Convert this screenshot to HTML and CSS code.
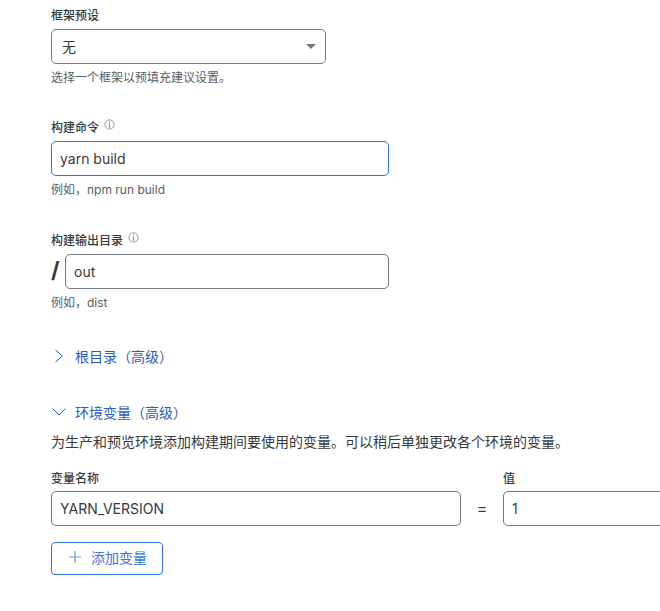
FILE: index.html
```html
<!DOCTYPE html>
<html lang="zh">
<head>
<meta charset="utf-8">
<title>构建设置</title>
<link rel="stylesheet" href="styles.css">
</head>
<body>
<main class="form">
  <section class="field field-preset">
    <div class="label">框架预设</div>
    <div class="box box-select"><span>无</span><span class="caret"></span></div>
    <div class="hint">选择一个框架以预填充建议设置。</div>
  </section>
  <section class="field field-command">
    <div class="label label-tip">构建命令 <svg class="info" viewBox="0 0 10 10"><circle cx="5" cy="5" r="4.2"/><path d="M5 4.4V7.4M4.2 7.4H5.8M4.4 4.4H5"/><circle class="dot" cx="5" cy="2.8" r=".5"/></svg></div>
    <div class="box box-wide box-focus">yarn build</div>
    <div class="hint">例如，npm run build</div>
  </section>
  <section class="field field-output">
    <div class="label label-tip">构建输出目录 <svg class="info" viewBox="0 0 10 10"><circle cx="5" cy="5" r="4.2"/><path d="M5 4.4V7.4M4.2 7.4H5.8M4.4 4.4H5"/><circle class="dot" cx="5" cy="2.8" r=".5"/></svg></div>
    <div class="path-row"><span class="slash">/</span><div class="box box-grow">out</div></div>
    <div class="hint">例如，dist</div>
  </section>
  <div class="toggle toggle-root">
    <svg class="chev" viewBox="0 0 14 14"><path d="M3.5 1L10.5 7L3.5 13"/></svg>
    <span>根目录（高级）</span>
  </div>
  <div class="toggle toggle-env">
    <svg class="chev" viewBox="0 0 14 14"><path d="M.5 3.5L7 10L13.5 3.5"/></svg>
    <span>环境变量（高级）</span>
  </div>
  <p class="desc">为生产和预览环境添加构建期间要使用的变量。可以稍后单独更改各个环境的变量。</p>
  <div class="vars">
    <div class="var-col var-name">
      <div class="label">变量名称</div>
      <div class="box">YARN_VERSION</div>
    </div>
    <div class="equals">=</div>
    <div class="var-col var-value">
      <div class="label">值</div>
      <div class="box">1</div>
    </div>
  </div>
  <button class="add" type="button">
    <svg class="plus" viewBox="0 0 12 12"><path d="M6 0V12M0 6H12"/></svg>
    <span>添加变量</span>
  </button>
</main>
</body>
</html>
```
FILE: styles.css
```css
html, body {
  margin: 0;
  height: 611px;
  overflow: hidden;
  background: #fff;
}
body {
  font-family: Inter, "Noto Sans CJK SC", sans-serif;
  color: #36393a;
}
.form {
  padding: 7px 0 0 51px;
  width: 660px;
  height: 611px;
  overflow: hidden;
  box-sizing: border-box;
}
.label {
  font-size: 12px;
  font-weight: 500;
  line-height: 18px;
  height: 18px;
  margin-bottom: 4px;
  color: #36393a;
  white-space: nowrap;
}
.label-tip {
  line-height: 16px;
}
.box {
  box-sizing: border-box;
  height: 35px;
  border: 1px solid #74787a;
  border-radius: 5px;
  padding: 0 8px;
  font-size: 14px;
  line-height: 33px;
  color: #36393a;
  background: #fff;
}
.box-select {
  width: 275px;
  padding: 0 9px 0 10px;
  display: flex;
  justify-content: space-between;
  align-items: center;
}
.caret {
  width: 0;
  height: 0;
  border-left: 5px solid transparent;
  border-right: 5px solid transparent;
  border-top: 5px solid #74787a;
}
.box-wide { width: 338px; }
.box-focus { border-color: #2f6fd0; }
.box-grow { width: 324px; }
.hint {
  font-size: 12px;
  line-height: 18px;
  margin-top: 5px;
  color: #595d5f;
  white-space: nowrap;
}
.field-preset { height: 112px; }
.field-command { height: 113px; }
.field-output { height: 100px; }
.info {
  width: 11px;
  height: 11px;
  margin-left: 2px;
  vertical-align: 2px;
  fill: none;
  stroke: #74787a;
  stroke-width: .7;
}
.info .dot { fill: #74787a; stroke: none; }
.path-row {
  display: flex;
  align-items: center;
  gap: 8px;
}
.slash {
  font-size: 22px;
  font-weight: 700;
  line-height: 33px;
  padding-bottom: 2px;
  width: 6px;
  color: #36393a;
}
.toggle {
  display: flex;
  align-items: center;
  height: 20px;
  font-size: 14px;
  color: #2a5db8;
  white-space: nowrap;
}
.toggle-root { margin-top: 14px; }
.toggle-env { margin-top: 36px; }
.chev {
  width: 14px;
  height: 14px;
  margin-left: 1px;
  margin-right: 9px;
  fill: none;
  stroke: #2a5db8;
  stroke-width: 1;
}
.desc {
  margin: 10px 0 0;
  font-size: 14px;
  line-height: 20px;
  color: #36393a;
  white-space: nowrap;
}
.vars {
  display: flex;
  margin-top: 18px;
  width: 752px;
}
.var-col { flex: none; }
.var-col .label { margin-bottom: 3px; }
.var-name { width: 410px; }
.var-value { width: 300px; }
.equals {
  flex: none;
  width: 42px;
  font-size: 16px;
  line-height: 35px;
  margin-top: 21px;
  text-align: center;
}
.add {
  display: flex;
  align-items: center;
  justify-content: center;
  gap: 10px;
  box-sizing: border-box;
  width: 112px;
  height: 33px;
  margin-top: 16px;
  padding: 0 0 3px 2px;
  border: 1px solid #2f6fe0;
  border-radius: 4px;
  background: #fff;
  color: #3d74d6;
  font-family: inherit;
  font-size: 14px;
}
.plus {
  width: 12px;
  height: 12px;
  fill: none;
  stroke: #6f97e4;
  stroke-width: 1.2;
}
```
